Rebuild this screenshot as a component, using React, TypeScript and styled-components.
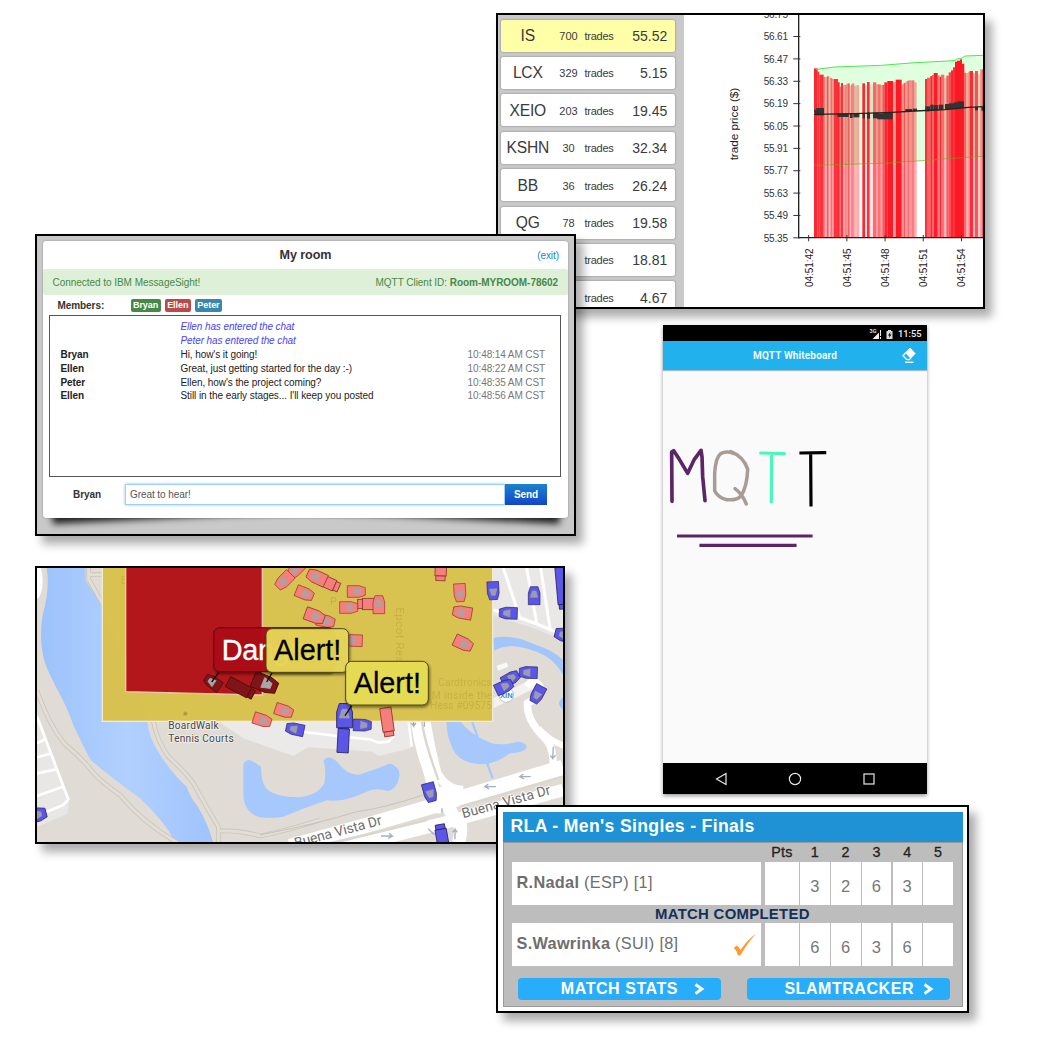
import React from 'react';
import styled, { createGlobalStyle, css } from 'styled-components';

const sans = `"Liberation Sans", Arial, sans-serif`;
const roboto = `Roboto, "Liberation Sans", sans-serif`;

const GlobalStyle = createGlobalStyle`
  body { margin: 0; background: #fff; font-family: ${sans}; }
  * { box-sizing: border-box; }
`;

const Desktop = styled.main`
  position: relative;
  width: 1042px;
  height: 1042px;
  overflow: hidden;
  background: #fff;
`;

const Frame = styled.section<{ $x: number; $y: number; $w: number; $h: number }>`
  position: absolute;
  left: ${p => p.$x}px;
  top: ${p => p.$y}px;
  width: ${p => p.$w}px;
  height: ${p => p.$h}px;
  border: 2px solid #000;
  background: #fff;
  box-shadow: 7px 8px 9px rgba(0, 0, 0, 0.33);
`;

/* ---------- Trades ---------- */

const TradesBody = styled.div`
  display: flex;
  height: 100%;
  overflow: hidden;
`;

const TickerList = styled.div`
  flex: 0 0 186px;
  display: flex;
  flex-direction: column;
  gap: 5.4px;
  padding: 4.6px 9.2px 0 3px;
  background: #c9c9c9;
`;

const Ticker = styled.div<{ $active?: boolean }>`
  flex: 0 0 32px;
  display: grid;
  grid-template-columns: 53.5px 28px 34px 1fr;
  align-items: center;
  padding: 1px 7.5px 0 0;
  border-radius: 2px;
  background: ${p => (p.$active ? '#ffffa8' : '#fff')};
  box-shadow: 0 0 2px rgba(90, 90, 90, 0.75);
  color: #3a3a3a;
`;

const Symbol = styled.span`
  font-size: 15.6px;
  text-align: center;
  letter-spacing: -0.2px;
`;

const Count = styled.span`
  font-size: 11px;
  text-align: center;
`;

const Unit = styled.span`
  font-size: 11px;
  letter-spacing: -0.25px;
  padding-left: 2px;
`;

const Price = styled.span`
  font-size: 14px;
  text-align: right;
`;

const ChartSvg = styled.svg`
  display: block;
  flex: 0 0 299px;
  height: 292px;
  font-family: ${sans};
`;

const tickers: [string, string, string][] = [
  ['IS', '700', '55.52'],
  ['LCX', '329', '5.15'],
  ['XEIO', '203', '19.45'],
  ['KSHN', '30', '32.34'],
  ['BB', '36', '26.24'],
  ['QG', '78', '19.58'],
  ['', '', '18.81'],
  ['', '', '4.67'],
];

// start, end, top, opacity
const bars: [number, number, number, number][] = [
  [297, 308, 190, 0.9], [308, 313, 200, 0.85], [313, 326, 209, 0.86], [326, 331, 216, 0.55],
  [331, 335, 216, 0.3], [335, 341, 214, 0.7], [341, 346, 214, 0.22], [346, 352, 219, 0.6],
  [352, 356, 222, 0.4], [356, 369, 222, 0.86], [369, 374, 232, 0.9], [374, 378, 245, 0.6],
  [378, 384, 234, 0.85], [384, 391, 240, 0.38], [391, 394, 240, 0.7], [394, 398, 236, 0.45],
  [398, 404, 235, 0.68], [404, 409, 242, 0.28], [409, 412, 238, 0.7], [412, 418, 235, 0.5],
  [418, 426, 242, 0.3], [426, 432, 240, 0.35], [432, 436, 245, 0.1], [442, 450, 235, 0.9],
  [450, 456, 240, 0.12], [456, 464, 231, 0.86], [464, 474, 238, 0.12], [474, 484, 232, 0.62],
  [484, 488, 238, 0.4], [488, 497, 238, 0.6], [497, 502, 240, 0.4], [502, 508, 240, 0.7],
  [508, 517, 232, 0.9], [517, 534, 228, 0.96], [534, 542, 230, 0.4], [542, 560, 224, 0.96],
  [560, 566, 238, 0.45], [566, 571, 234, 0.7], [571, 577, 230, 0.4], [577, 582, 227, 0.62],
  [582, 590, 226, 0.45], [590, 598, 226, 0.55], [598, 605, 232, 0.35],
  [630, 636, 222, 0.86], [636, 646, 218, 0.66], [646, 651, 213, 0.9], [651, 656, 210, 0.65],
  [656, 668, 204, 0.95], [668, 674, 211, 0.55], [674, 678, 215, 0.9], [678, 688, 209, 0.6],
  [688, 694, 220, 0.25], [694, 701, 212, 0.7], [701, 708, 202, 0.75], [708, 714, 196, 0.9],
  [714, 720, 187, 0.86], [720, 726, 170, 0.96], [726, 735, 167, 0.96], [735, 741, 163, 0.96],
  [741, 748, 176, 0.94], [748, 753, 203, 0.65], [753, 760, 204, 0.35], [760, 764, 200, 0.5],
  [764, 774, 198, 0.88], [774, 780, 205, 0.3], [780, 789, 198, 0.72], [789, 795, 208, 0.2],
  [795, 800, 193, 0.4], [800, 804, 193, 0.7],
];

// blobs of executed trades riding the average line: x, y, w, h
const blobs: [number, number, number, number][] = [
  [297, 314, 30, 8], [304, 309, 23, 22], [299, 319, 8, 11], [367, 326, 34, 10], [405, 324, 8, 15],
  [415, 325, 18, 12], [443, 324, 7, 16], [456, 323, 9, 18], [474, 323, 16, 17], [487, 325, 20, 18],
  [507, 321, 26, 22], [571, 312, 20, 8], [593, 311, 13, 7], [631, 304, 14, 15], [646, 299, 10, 19],
  [657, 300, 13, 16], [672, 299, 13, 16], [690, 297, 12, 17], [702, 295, 15, 17], [717, 292, 12, 18],
  [728, 289, 19, 20], [780, 306, 9, 10], [799, 305, 5, 12],
];

const priceTicks = ['56.75', '56.61', '56.47', '56.33', '56.19', '56.05', '55.91', '55.77', '55.63', '55.49', '55.35'];
const timeTicks = ['04:51:42', '04:51:45', '04:51:48', '04:51:51', '04:51:54'];

function TradeChart() {
  return (
    <ChartSvg viewBox="-93 30 897 876">
      <path
        d="M297 194 L360 186 L500 181 L600 173 L700 168 L720 166 L728 161 L738 161 L750 153 L804 151 V454 L700 461 L620 467 L500 475 L297 481Z"
        fill="#e0ffdf"
      />
      {bars.map(([a, b, t, o]) => (
        <rect key={a} x={a} y={t} width={b - a} height={698 - t} fill="#fc101c" opacity={o} />
      ))}
      <path d="M303 193 L360 186 L500 181 L600 173 L700 168 L720 166 L728 161 L738 161 L750 153 L804 151" fill="none" stroke="#4be84b" strokeWidth="3" />
      <path d="M297 481 L500 475 L620 467 L700 461 L804 454" fill="none" stroke="#77a01c" strokeWidth="2.5" opacity=".75" />
      {blobs.map(([x, y, w, h]) => (
        <rect key={x} x={x} y={y} width={w} height={h} fill="#333" />
      ))}
      <path d="M297 328 L420 326 L530 322 L600 318 L690 314 L760 307 L804 305" fill="none" stroke="#222" strokeWidth="4" />
      <path d="M251 30 V698 H804" fill="none" stroke="#222" strokeWidth="4" />
      {priceTicks.map((t, i) => {
        const y = 27.5 + i * 67.1;
        return (
          <g key={t}>
            <path d={`M235 ${y}H256`} stroke="#333" strokeWidth="3" />
            <text x="219" y={y + 11} fontSize="30" textAnchor="end" textLength="73" fill="#333">{t}</text>
          </g>
        );
      })}
      {timeTicks.map((t, i) => {
        const x = 281 + i * 114.6;
        return (
          <g key={t}>
            <path d={`M${x} 690V709`} stroke="#333" strokeWidth="3" />
            <text transform={`translate(${x + 12} 846) rotate(-90)`} fontSize="30" textLength="116" fill="#222">{t}</text>
          </g>
        );
      })}
      <text transform="translate(68 466) rotate(-90)" fontSize="35.5" textLength="218" fill="#222">trade price ($)</text>
    </ChartSvg>
  );
}

/* ---------- Chat ---------- */

const ChatBody = styled.div`
  height: 100%;
  padding: 5px 6px 0;
  background: #c9c9c9;
`;

const ChatCard = styled.div`
  position: relative;
  z-index: 0;
  display: flex;
  flex-direction: column;
  height: 277px;
  border-radius: 3px;
  background: transparent;
  font-size: 10px;
  letter-spacing: -0.07px;
  color: #333;
`;

const LiftedCorner = styled.i<{ $side: 'left' | 'right' }>`
  position: absolute;
  z-index: -1;
  bottom: 8px;
  ${p => p.$side}: 9px;
  width: 46%;
  height: 30px;
  box-shadow: 0 14px 7px rgba(0, 0, 0, 0.85);
  transform: rotate(${p => (p.$side === 'left' ? -3 : 3)}deg);
  transform-origin: ${p => p.$side} bottom;
`;

const CardFace = styled.div`
  display: flex;
  flex-direction: column;
  height: 100%;
  border-radius: 3px;
  background: #fff;
  box-shadow: 0 0 2px rgba(0, 0, 0, 0.35);
`;

const ChatHeader = styled.header`
  display: grid;
  grid-template-columns: 60px 1fr 60px;
  align-items: center;
  height: 28px;
  padding: 0 9px;
`;

const RoomTitle = styled.h1`
  grid-column: 2;
  margin: 0;
  font-size: 12.6px;
  text-align: center;
`;

const ExitLink = styled.a`
  font-size: 10px;
  text-align: right;
  color: #1584cc;
`;

const Connected = styled.div`
  display: flex;
  justify-content: space-between;
  align-items: center;
  height: 26px;
  padding: 0 10px 0 9.5px;
  border-radius: 2px;
  background: #dff0d8;
  font-size: 10px;
  letter-spacing: -0.04px;
  color: #468847;
`;

const Members = styled.div`
  display: flex;
  align-items: center;
  gap: 4px;
  height: 20px;
  padding-left: 14.5px;
`;

const MembersLabel = styled.b`
  width: 69px;
`;

const Badge = styled.b<{ $bg: string }>`
  height: 13px;
  padding: 0 2.5px;
  border-radius: 2px;
  background: ${p => p.$bg};
  font-size: 9px;
  line-height: 13.5px;
  color: #fff;
`;

const Log = styled.div`
  height: 162px;
  margin: 0 7px 0 6px;
  padding: 4px 15px 0 10.5px;
  border: 1px solid #555;
`;

const LogRow = styled.div<{ $notice?: boolean }>`
  display: grid;
  grid-template-columns: 120px 1fr auto;
  height: 13.9px;
  line-height: 14px;
  color: #222;
  ${p => p.$notice && css`
    font-style: italic;
    letter-spacing: -0.1px;
    color: #4a42ff;
  `}
`;

const LogTime = styled.span`
  letter-spacing: -0.1px;
  color: #777;
`;

const Composer = styled.div`
  display: grid;
  grid-template-columns: 76px 380px 42px;
  align-items: center;
  height: 34px;
  padding-left: 6px;
`;

const Me = styled.b`
  text-align: center;
`;

const Draft = styled.div`
  height: 21px;
  padding-left: 4px;
  border: 1px solid #9fd0f0;
  box-shadow: 0 0 3px #8cc8f2;
  line-height: 19px;
  color: #555;
`;

const Send = styled.button`
  height: 21px;
  padding: 0;
  border: 0;
  background: linear-gradient(#1b84cc, #1244cc);
  font: bold 10px ${sans};
  letter-spacing: -0.15px;
  color: #fff;
`;

const messages: [string, string, string][] = [
  ['', 'Ellen has entered the chat', ''],
  ['', 'Peter has entered the chat', ''],
  ['Bryan', "Hi, how's it going!", '10:48:14 AM CST'],
  ['Ellen', 'Great, just getting started for the day :-)', '10:48:22 AM CST'],
  ['Peter', "Ellen, how's the project coming?", '10:48:35 AM CST'],
  ['Ellen', "Still in the early stages... I'll keep you posted", '10:48:56 AM CST'],
];

/* ---------- Phone ---------- */

const Phone = styled.section`
  position: absolute;
  left: 663px;
  top: 325px;
  display: flex;
  flex-direction: column;
  width: 264px;
  height: 469px;
  background: #fafafa;
  box-shadow: 0 1.5px 4px rgba(0, 0, 0, 0.4);
  font-family: ${roboto};
`;

const StatusBar = styled.div`
  display: flex;
  justify-content: flex-end;
  align-items: center;
  height: 16px;
  padding: 1px 5.5px 0 0;
  background: #000;
  color: #eee;
  font-size: 9.3px;
  font-weight: 500;
`;

const StatusIcons = styled.svg`
  width: 24px;
  height: 12px;
  margin-right: 3px;
  overflow: visible;
`;

const AppBar = styled.div`
  display: grid;
  grid-template-columns: 40px 1fr 40px;
  align-items: center;
  height: 29px;
  background: #21b1ec;
  box-shadow: 0 1px 1px rgba(0, 80, 120, 0.35);
`;

const AppTitle = styled.div`
  grid-column: 2;
  text-align: center;
  font-size: 10px;
  font-weight: 600;
  letter-spacing: 0.15px;
  color: #fff;
`;

const EraserIcon = styled.svg`
  width: 14px;
  height: 17px;
  margin-left: 15px;
`;

const Board = styled.svg`
  display: block;
  width: 264px;
  height: 393px;
`;

const NavBar = styled.div`
  display: grid;
  grid-template-columns: repeat(3, 74px);
  justify-content: center;
  place-items: center;
  height: 31px;
  background: #000;
`;

const NavIcon = styled.svg`
  width: 14px;
  height: 14px;
  fill: none;
  stroke: #e8e8e8;
  stroke-width: 1.2;
`;

/* ---------- Map ---------- */

const MapSvg = styled.svg`
  display: block;
  width: 526px;
  height: 274px;
  font-family: ${sans};
`;

type Tone = 'blue' | 'red' | 'dark';
const tones: Record<Tone, [string, string, string]> = {
  blue: ['#5b56e6', '#262461', '#9b9bb0'],
  red: ['#f57f7b', '#8d3430', '#b39ea2'],
  dark: ['#7f1519', '#4d0b0d', '#a8a6a8'],
};

// x, y, heading, tone, scale
const cars: [number, number, number, Tone, number?][] = [
  [797, 30, 135, 'red'], [763, 62, 135, 'red', 1.05], [824, 100, 22, 'red'],
  [762, 452, 18, 'red'], [697, 480, 18, 'red'], [860, 52, 205, 'red', 1.1],
  [979, 94, 0, 'red'], [956, 142, 0, 'red'], [887, 183, 12, 'red'],
  [854, 168, 20, 'red', 1.1], [970, 242, 182, 'red'], [1046, 134, -90, 'red'],
  [1290, 98, 87, 'red'], [1297, 158, 190, 'red', 1.05], [1300, 250, 25, 'red', 1.05],
  [548, 368, 215, 'dark'], [705, 370, 22, 'dark', 1.4],
  [795, 508, 192, 'blue'], [943, 467, -90, 'blue', 1.35], [997, 495, 2, 'blue'],
  [1390, 92, 87, 'blue'], [1512, 107, -90, 'blue'], [1435, 160, 182, 'blue'],
  [1442, 355, -30, 'blue'], [1422, 380, -25, 'blue'], [1495, 338, 182, 'blue'], [1523, 403, 118, 'blue'],
  [1200, 697, 75, 'blue', 1.05], [1604, 226, 195, 'blue', 1.1], [18, 765, -15, 'blue', 1.15],
];

// x, y, length, heading, tone
const trucks: [number, number, number, number, Tone][] = [
  [902, 72, 54, 24, 'red'], [1020, 132, 74, 180, 'red'], [1232, 40, 44, 92, 'red'],
  [1072, 486, 86, 82, 'red'], [632, 385, 86, 28, 'dark'], [940, 535, 86, -87, 'blue'],
  [1597, 84, 126, 85, 'blue'], [1236, 832, 78, -100, 'blue'],
];

function Car({ x, y, r, tone, s = 1 }: { x: number; y: number; r: number; tone: Tone; s?: number }) {
  const [fill, line, glass] = tones[tone];
  return (
    <g transform={`translate(${x} ${y}) rotate(${r}) scale(${s})`}>
      <path d="M-27 -17H8L27 -11V12L8 18H-27Z" fill={fill} stroke={line} strokeWidth="2" />
      <path d="M-5 -11L14 -5V6L-5 11Z" fill={glass} stroke={glass} strokeWidth="2" strokeLinejoin="round" />
    </g>
  );
}

function Truck({ x, y, len, r, tone }: { x: number; y: number; len: number; r: number; tone: Tone }) {
  const [fill, line] = tones[tone];
  return (
    <g transform={`translate(${x} ${y}) rotate(${r})`} fill={fill} stroke={line} strokeWidth="2.5">
      <rect x={-len / 2} y="-17" width={len - 14} height="34" />
      <rect x={len / 2 - 14} y="-14" width="14" height="28" />
    </g>
  );
}

function TrafficMap() {
  return (
    <MapSvg viewBox="21 24 1578 822">
      <defs>
        <linearGradient id="water" x1="0" x2="1">
          <stop offset="0" stopColor="#9dc2fb" />
          <stop offset=".5" stopColor="#b1d0ff" />
          <stop offset="1" stopColor="#9fc3fc" />
        </linearGradient>
        <filter id="drop" x="-10%" y="-10%" width="125%" height="140%">
          <feDropShadow dx="3" dy="6" stdDeviation="5" floodOpacity=".5" />
        </filter>
      </defs>
      <rect x="21" y="24" width="1578" height="822" fill="#e0dcd5" />
      <ellipse cx="18" cy="62" rx="20" ry="55" fill="#fff" />

      {/* neighbourhood to the west */}
      <path d="M21 455 L118 720 L112 762 L21 800Z" fill="#e8e7e5" />
      <path d="M21 470 L115 718 L100 735 L21 768 M21 550 L45 538 M21 592 L66 580 M21 640 L78 628 M21 708 L98 680" fill="none" stroke="#fff" strokeWidth="8" />

      {/* river */}
      <path d="M50 24 Q60 90 38 165 Q25 240 45 310 Q65 360 88 400 Q110 440 130 495 Q160 560 182 600 Q240 650 330 715 Q400 780 436 846 H549 Q530 780 500 735 Q480 710 470 680 Q420 635 385 575 Q355 530 352 484 Q345 440 330 420 L240 200 Q220 160 213 130 L167 62 V24Z" fill="url(#water)" />

      {/* footpaths */}
      <g fill="none" stroke="#cbc4b8" strokeWidth="14">
        <path d="M21 392 Q55 490 102 550 Q150 590 182 628 Q205 660 270 705 Q340 790 445 850" />
        <path d="M370 484 Q380 540 415 590 Q470 640 490 670 Q540 760 565 800 V850 M565 812 Q640 812 690 828 Q770 812 870 780" />
        <path d="M176 24 V58 L217 130 M176 44 H217" />
      </g>
      <g fill="none" stroke="#e2ded7" strokeWidth="9">
        <path d="M21 392 Q55 490 102 550 Q150 590 182 628 Q205 660 270 705 Q340 790 445 850" />
        <path d="M370 484 Q380 540 415 590 Q470 640 490 670 Q540 760 565 800 V850 M565 812 Q640 812 690 828 Q770 812 870 780" />
        <path d="M176 24 V58 L217 130 M176 44 H217" />
      </g>
      <path d="M690 825 Q870 790 980 755 Q1060 745 1180 705" fill="none" stroke="#c3bdb1" strokeWidth="2.5" />

      {/* parking south of the zone */}
      <path d="M560 480 L640 535 L790 588 L835 562 L1028 575 L1045 588 L1142 565 L1130 480Z" fill="#ebeae8" />
      <path d="M815 515 L920 528 L1020 538 L1045 548 L1075 545 L1092 528 M1135 480 L1145 560" fill="none" stroke="#fff" strokeWidth="8" />

      {/* blocks to the east */}
      <path d="M1380 24 H1599 V240 L1500 200 L1380 165Z" fill="#e9e8e7" />
      <path d="M1388 150 Q1490 175 1599 226 M1420 24 L1470 175 M1490 24 L1520 190 M1532 24 L1560 205" fill="none" stroke="#fff" strokeWidth="9" />
      <path d="M1390 415 L1500 360 L1515 385 L1390 445Z" fill="#f3f2f0" />
      <path d="M1400 318 L1430 307 L1435 320 L1405 332Z" fill="#f8f8f8" />
      <path d="M1390 234 Q1450 222 1510 252 Q1570 270 1599 300 V345 Q1570 290 1510 272 Q1440 245 1392 272Z M1599 412 Q1575 430 1599 448Z" fill="#a2c5fc" />

      {/* ponds */}
      <path d="M640 612 Q652 592 670 605 L693 620 Q693 660 706 682 Q728 712 810 712 Q865 705 883 670 Q890 630 880 602 Q895 582 920 604 Q950 645 986 644 Q1040 628 1080 610 Q1112 622 1108 650 Q1100 690 1072 693 Q1040 682 1010 695 Q940 728 890 721 Q820 745 760 770 Q720 776 690 772 Q640 758 640 700Z" fill="#a6c8fd" />
      <path d="M1250 484 H1290 Q1325 528 1385 550 Q1420 558 1462 545 Q1490 546 1490 563 Q1480 578 1440 580 Q1400 612 1352 613 Q1285 610 1266 562 Q1248 520 1250 484Z" fill="#a6c8fd" />
      <path d="M1326 484 L1388 655" stroke="#a6c8fd" strokeWidth="7" />

      {/* roads */}
      <g fill="none" stroke="#fff">
        <path d="M1160 470 Q1165 540 1190 610 Q1215 680 1215 760" strokeWidth="36" />
        <path d="M1186 470 Q1200 560 1222 640 Q1250 690 1300 690" strokeWidth="26" />
        <path d="M1245 680 Q1250 760 1290 790 Q1295 820 1285 850" strokeWidth="40" />
        <path d="M780 860 Q1000 800 1220 735 L1599 622" strokeWidth="46" />
        <path d="M900 875 L1230 792 L1599 690" strokeWidth="38" />
        <path d="M1490 380 Q1512 350 1530 380 Q1535 410 1492 430 Q1490 480 1540 530 Q1575 560 1568 630" strokeWidth="22" />
        <path d="M1525 505 Q1560 545 1610 560" strokeWidth="18" />
      </g>
      <path d="M1175 480 Q1182 540 1225 660" fill="none" stroke="#dcd7cd" strokeWidth="7" />
      <path d="M830 866 Q1050 815 1190 780 M1290 740 L1599 650" fill="none" stroke="#dcd7cd" strokeWidth="8" />
      <path d="M1312 846 Q1305 800 1360 785 L1599 715 V846Z" fill="#e0dcd5" />
      <g fill="none" stroke="#a2b0bd" strokeWidth="4">
        <path d="M1398 680 H1365 l10 -8 m-10 8 l12 7 M1502 650 H1470 l10 -8 m-10 8 l12 7 M1053 828 H1087 l-10 -8 m10 8 l-12 7" />
        <path d="M1275 838 V808 l-7 9 m7 -9 l7 9 M1151 480 V498 l-7 -9 m7 9 l7 -9 M1183 500 V484 M1570 560 L1568 595 l-7 -9 m7 9 l9 -9 M1236 745 v12 M1195 806 l18 18" />
      </g>
      <g fill="#6e6e6e" stroke="#fff" strokeWidth="5" paintOrder="stroke" fontFamily={roboto} fontSize="41.5">
        <text transform="translate(797 863) rotate(-15)" textLength="270">Buena Vista Dr</text>
        <text transform="translate(1300 775) rotate(-15.5)" textLength="274">Buena Vista Dr</text>
      </g>
      <circle cx="1429" cy="405" r="22" fill="#fff" stroke="#9eabb5" strokeWidth="2" />
      <text x="1410" y="415" fontSize="23" fontWeight="bold" fill="#3f83c9">XIN</text>

      {/* warning and danger zones */}
      <rect x="217" y="10" width="1171" height="474" fill="#d9c24a" fillOpacity=".96" stroke="#f3ead2" strokeWidth="4" />
      <g fill="#b39a35" fontFamily={roboto} opacity=".45">
        <text transform="translate(1098 142) rotate(90)" fontSize="35" textLength="165">Epcot Res</text>
        <text x="900" y="134" fontSize="32">P</text>
        <text x="272" y="72" fontSize="30">E</text>
        <text x="1225" y="378" fontSize="31" textLength="160">Cardtronics</text>
        <text x="1205" y="416" fontSize="31" textLength="182">M   inside the</text>
        <text x="1200" y="448" fontSize="31" textLength="186">Hess #09575</text>
      </g>
      <circle cx="466" cy="461" r="12" fill="#d3b945" stroke="#decb65" strokeWidth="3" />
      <circle cx="466" cy="461" r="5" fill="#a99848" />
      <path d="M287 10 V395 L697 405 V10Z" fill="#b3171b" stroke="#efcbb0" strokeWidth="4" />

      <g fill="#454545" stroke="#f2f0ec" strokeWidth="5" paintOrder="stroke" fontFamily={roboto} fontSize="30.5">
        <text x="415" y="508" textLength="151">BoardWalk</text>
        <text x="415" y="546" textLength="196">Tennis Courts</text>
      </g>

      {trucks.map(([x, y, len, r, tone]) => <Truck key={`${x}-${y}`} x={x} y={y} len={len} r={r} tone={tone} />)}
      {cars.map(([x, y, r, tone, s]) => <Car key={`${x}-${y}`} x={x} y={y} r={r} tone={tone} s={s} />)}

      {/* callouts */}
      <path d="M568 335 L545 366 M727 337 L710 366 M966 436 L945 467" stroke="#111" strokeWidth="4" />
      <g fontSize="86.5">
        <rect x="551" y="203" width="362" height="132" rx="18" fill="#ac0719" fillOpacity=".96" stroke="#5e0a0d" strokeWidth="3" filter="url(#drop)" />
        <text x="575" y="299" fill="#fff" stroke="#fff" strokeWidth="1" textLength="302">Danger!</text>
        <rect x="708" y="206" width="248" height="131" rx="18" fill="#e7d656" fillOpacity=".95" stroke="#4d4619" strokeWidth="3" filter="url(#drop)" />
        <text x="732" y="300" fill="#000" stroke="#000" strokeWidth=".8" textLength="202">Alert!</text>
        <rect x="947" y="304" width="248" height="131" rx="18" fill="#e7dd52" fillOpacity=".97" stroke="#4d4619" strokeWidth="3" filter="url(#drop)" />
        <text x="971" y="399" fill="#000" stroke="#000" strokeWidth=".8" textLength="202">Alert!</text>
      </g>
    </MapSvg>
  );
}

/* ---------- Scoreboard ---------- */

const ScoreBody = styled.div`
  padding: 5px 4px 5px 5px;
  letter-spacing: 0.3px;
`;

const ScoreTitle = styled.h2`
  height: 30px;
  margin: 0;
  padding-left: 7.5px;
  background: #1e92d4;
  font-size: 17.6px;
  line-height: 28px;
  letter-spacing: 0.35px;
  color: #fff;
`;

const ScorePanel = styled.div`
  height: 165px;
  padding: 0 9px 0 8px;
  border: 1px solid #9a9a9a;
  background: #bdbdbd;
`;

const ScoreRow = styled.div<{ $h: number }>`
  display: grid;
  grid-template-columns: 249px 36.8px repeat(5, 29.6px);
  column-gap: 1.2px;
  height: ${p => p.$h}px;
  & > :nth-child(2) { margin-left: 2.8px; }
`;

const SetLabel = styled.span`
  align-self: center;
  text-align: center;
  font-size: 14.3px;
  line-height: 16px;
  padding-bottom: 1px;
  color: #222;
  -webkit-text-stroke: 0.3px #222;
`;

const PlayerCell = styled.div`
  display: flex;
  align-items: center;
  justify-content: space-between;
  padding: 0 4px 2px 4.5px;
  background: #fff;
  font-size: 16.3px;
  letter-spacing: 0.3px;
  color: #6e6e6e;
`;

const ScoreCell = styled.div`
  display: grid;
  place-items: center;
  padding-top: 6px;
  background: #fff;
  font-size: 16.5px;
  color: #777;
`;

const Check = styled.svg`
  width: 24px;
  height: 24px;
`;

const MatchState = styled.div`
  height: 18px;
  padding-left: 143px;
  font-size: 14.9px;
  font-weight: 700;
  line-height: 19px;
  color: #12305a;
`;

const Actions = styled.div`
  display: flex;
  gap: 26px;
  padding: 12px 0 0 6px;
`;

const Action = styled.button<{ $gap: number }>`
  display: flex;
  align-items: center;
  justify-content: flex-end;
  gap: ${p => p.$gap}px;
  width: 203px;
  height: 22px;
  padding: 0 16px 0 0;
  border: 0;
  border-radius: 4px;
  background: #28adfb;
  font: bold 16px ${sans};
  letter-spacing: 0.55px;
  color: #fff;
`;

const Arrow = styled.svg`
  width: 11px;
  height: 12px;
`;

const players: { name: string; rest: string; sets: string[]; won?: boolean }[] = [
  { name: 'R.Nadal', rest: '(ESP) [1]', sets: ['', '3', '2', '6', '3', ''] },
  { name: 'S.Wawrinka', rest: '(SUI) [8]', sets: ['', '6', '6', '3', '6', ''], won: true },
];

function PlayerRow({ index }: { index: number }) {
  const p = players[index];
  return (
    <ScoreRow $h={43}>
      <PlayerCell>
        <span><b>{p.name}</b> {p.rest}</span>
        {p.won && (
          <Check viewBox="0 0 24 24">
            <path d="M0.5 16 L4 13.5 Q6.5 15.5 7.5 18 Q14 8 23.5 1.5 Q15 10 8 22.5 Q6 24.5 4.5 22.5 Q4 18.5 0.5 16Z" fill="#ff9b2f" />
          </Check>
        )}
      </PlayerCell>
      {p.sets.map((s, i) => <ScoreCell key={i}>{s}</ScoreCell>)}
    </ScoreRow>
  );
}

function ActionButton({ label, gap }: { label: string; gap: number }) {
  return (
    <Action $gap={gap}>
      {label}
      <Arrow viewBox="0 0 11 12">
        <path d="M1.5 1.5 L8 6 L1.5 10.5" fill="none" stroke="#fff" strokeWidth="2.8" />
      </Arrow>
    </Action>
  );
}

export default function App() {
  return (
    <Desktop>
      <GlobalStyle />

      <Frame $x={496} $y={13} $w={489} $h={296}>
        <TradesBody>
          <TickerList>
            {tickers.map(([s, n, p], i) => (
              <Ticker key={p} $active={i === 0}>
                <Symbol>{s}</Symbol>
                <Count>{n}</Count>
                <Unit>trades</Unit>
                <Price>{p}</Price>
              </Ticker>
            ))}
          </TickerList>
          <TradeChart />
        </TradesBody>
      </Frame>

      <Phone>
        <StatusBar>
          <StatusIcons viewBox="0 0 24 12">
            <text x="-1.5" y="5" fontSize="5.5" fontWeight="bold" fill="#ddd">3G</text>
            <path d="M1.5 11 L8 4.5 V11Z M9 2 h1 v6 h-1z M9 9 h1 v2 h-1z" fill="#eee" />
            <path d="M15.5 3 H17 V2 h3 v1 h1.5 V11 h-6z" fill="#ddd" />
            <path d="M19.5 4 L17 7.5 h1.5 L18 10 L20.5 6.5 H19z" fill="#000" />
          </StatusIcons>
          11:55
        </StatusBar>
        <AppBar>
          <AppTitle>MQTT Whiteboard</AppTitle>
          <EraserIcon viewBox="0 0 14 17">
            <path d="M8 1 L13 6.5 L8.7 11.2 L3.6 5.8Z" fill="#fff" stroke="#fff" strokeLinejoin="round" />
            <path d="M3.6 5.8 L1 8.7 L4.8 12.6 H7.3 L8.7 11.2" fill="none" stroke="#fff" strokeWidth="1.3" />
            <path d="M3 15.3 H11.5" stroke="#fff" strokeWidth="1.4" />
          </EraserIcon>
        </AppBar>
        <Board viewBox="24 150 792 1179" fill="none" strokeWidth="11" strokeLinecap="round" strokeLinejoin="round">
          <path d="M51 544 L50 396 L56 392 L73 418 L98 460 L118 418 L138 391 L141 410 L143 470 L150 542" stroke="#5c2565" />
          <path d="M240 506 Q262 522 274 552 M235 400 Q215 392 197 401 Q182 412 179 460 V512 Q190 534 216 539 Q245 542 258 528 Q276 500 278 448 Q266 410 228 395" stroke="#a89c96" strokeWidth="10.5" />
          <path d="M317 399 L388 401 M350 402 L349 546" stroke="#48f7b9" strokeWidth="9.5" />
          <path d="M438 399 L509 398 M467 402 L468 555" stroke="#000" strokeWidth="9.5" strokeLinecap="square" />
          <path d="M71 648 H468 M138 676 H420" stroke="#5c2565" strokeWidth="9.5" strokeLinecap="square" />
        </Board>
        <NavBar>
          <NavIcon viewBox="0 0 14 14"><path d="M12 1.5 V12.5 L2.5 7Z" /></NavIcon>
          <NavIcon viewBox="0 0 14 14"><circle cx="7" cy="7" r="5.6" /></NavIcon>
          <NavIcon viewBox="0 0 14 14"><rect x="2" y="2" width="10" height="10" /></NavIcon>
        </NavBar>
      </Phone>

      <Frame $x={35} $y={234} $w={541} $h={302}>
        <ChatBody>
          <ChatCard>
            <LiftedCorner $side="left" />
            <LiftedCorner $side="right" />
            <CardFace>
              <ChatHeader>
                <RoomTitle>My room</RoomTitle>
                <ExitLink>(exit)</ExitLink>
              </ChatHeader>
              <Connected>
                <span>Connected to IBM MessageSight!</span>
                <span>MQTT Client ID: <b>Room-MYROOM-78602</b></span>
              </Connected>
              <Members>
                <MembersLabel>Members:</MembersLabel>
                <Badge $bg="#468847">Bryan</Badge>
                <Badge $bg="#b94a48">Ellen</Badge>
                <Badge $bg="#3a87ad">Peter</Badge>
              </Members>
              <Log>
                {messages.map(([who, text, time], i) => (
                  <LogRow key={i} $notice={!who}>
                    <b>{who}</b>
                    <span>{text}</span>
                    <LogTime>{time}</LogTime>
                  </LogRow>
                ))}
              </Log>
              <Composer>
                <Me>Bryan</Me>
                <Draft>Great to hear!</Draft>
                <Send>Send</Send>
              </Composer>
            </CardFace>
          </ChatCard>
        </ChatBody>
      </Frame>

      <Frame $x={35} $y={566} $w={530} $h={278}>
        <TrafficMap />
      </Frame>

      <Frame $x={496} $y={805} $w={473} $h={208}>
        <ScoreBody>
          <ScoreTitle>RLA - Men's Singles - Finals</ScoreTitle>
          <ScorePanel>
            <ScoreRow $h={19}>
              <span />
              {['Pts', '1', '2', '3', '4', '5'].map(l => <SetLabel key={l}>{l}</SetLabel>)}
            </ScoreRow>
            <PlayerRow index={0} />
            <MatchState>MATCH COMPLETED</MatchState>
            <PlayerRow index={1} />
            <Actions>
              <ActionButton label="MATCH STATS" gap={16} />
              <ActionButton label="SLAMTRACKER" gap={9} />
            </Actions>
          </ScorePanel>
        </ScoreBody>
      </Frame>
    </Desktop>
  );
}
